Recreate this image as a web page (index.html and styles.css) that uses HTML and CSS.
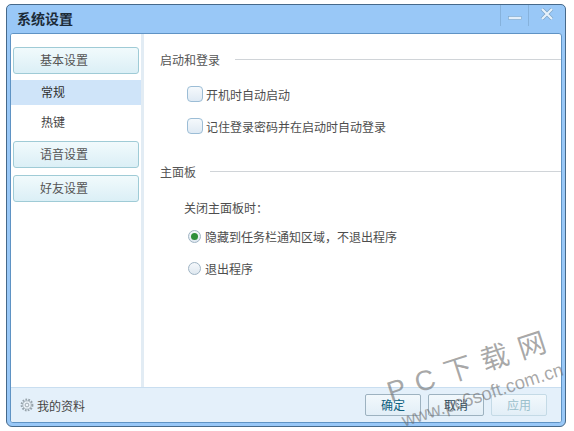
FILE: index.html
```html
<!DOCTYPE html>
<html lang="zh">
<head>
<meta charset="utf-8">
<title>系统设置</title>
<link rel="stylesheet" href="styles.css">
</head>
<body>
<div class="window">
  <header class="titlebar">
    <h1 class="title">系统设置</h1>
    <div class="controls">
      <button class="ctl" aria-label="最小化"><svg width="16" height="12" viewBox="0 0 16 12"><rect x="1.5" y="5.5" width="13" height="3" fill="#e2eefa" stroke="#7ea6c8" stroke-width=".6"/></svg></button>
      <button class="ctl ctl-close" aria-label="关闭"><svg width="16" height="12" viewBox="0 0 16 12"><path d="M3 1l10 10M13 1L3 11" stroke="#7ea6c8" stroke-width="3.6"/><path d="M3 1l10 10M13 1L3 11" stroke="#e6f1fb" stroke-width="2.2"/></svg></button>
    </div>
  </header>
  <div class="client">
    <div class="main">
      <nav class="sidebar">
        <div class="group">基本设置</div>
        <div class="item item-active">常规</div>
        <div class="item">热键</div>
        <div class="group">语音设置</div>
        <div class="group group-last">好友设置</div>
      </nav>
      <section class="content">
        <div class="heading"><span>启动和登录</span><i class="rule"></i></div>
        <div class="opts">
          <label class="check"><i class="box"></i>开机时自动启动</label>
          <label class="check"><i class="box"></i>记住登录密码并在启动时自动登录</label>
        </div>
        <div class="heading heading-2"><span>主面板</span><i class="rule rule-2"></i></div>
        <div class="sub">关闭主面板时：</div>
        <div class="radios">
          <label class="radio"><i class="dot dot-on"></i>隐藏到任务栏通知区域，不退出程序</label>
          <label class="radio"><i class="dot"></i>退出程序</label>
        </div>
      </section>
    </div>
    <footer class="footer">
      <div class="profile">
        <svg class="gear" width="14" height="14" viewBox="0 0 14 14"><circle cx="7" cy="7" r="5.4" fill="none" stroke="#98a4ac" stroke-width="2" stroke-dasharray="1.7 1.2"/><circle cx="7" cy="7" r="4.2" fill="#eef5fb" stroke="#98a4ac" stroke-width=".8"/><circle cx="7" cy="7" r="1.9" fill="none" stroke="#98a4ac" stroke-width=".9"/></svg>
        <span>我的资料</span>
      </div>
      <div class="buttons">
        <button class="btn btn-ok">确定</button>
        <button class="btn">取消</button>
        <button class="btn btn-off">应用</button>
      </div>
    </footer>
  </div>
  <div class="mark">
    <div class="mark-big">P C 下 载 网</div>
    <div class="mark-small">www.pc6soft.com.cn</div>
  </div>
</div>
</body>
</html>
```
FILE: styles.css
```css
* { box-sizing: border-box; }
html, body { margin: 0; height: 100%; }
body {
  background: #fff;
  font-family: "Noto Sans CJK SC", "Liberation Sans", sans-serif;
  font-size: 12px;
  color: #4a4a4a;
  padding: 4px 8px 4px 6px;
  overflow: hidden;
}
.window {
  position: relative;
  width: 560px;
  height: 423px;
  border: 1px solid #46698a;
  border-radius: 5px 5px 6px 6px;
  background: #99c8f7;
  display: flex;
  flex-direction: column;
  padding: 0 3px 3px 3px;
}
.titlebar {
  height: 28px;
  flex: none;
  display: flex;
  justify-content: space-between;
  align-items: flex-start;
}
.title {
  margin: 4px 0 0 7px;
  font-size: 14px;
  line-height: 18px;
  font-weight: 700;
  color: #1c2b38;
}
.controls { display: flex; margin-right: -2px; }
.ctl {
  width: 28px;
  height: 21px;
  padding: 6px 0 0;
  background: transparent;
  border: 0;
  border-left: 1px solid #86b2dc;
  display: flex;
  justify-content: center;
}
.ctl-close { width: 36px; padding-top: 3px; }
.client {
  flex: 1;
  min-height: 0;
  background: #fff;
  border: 1px solid #5f93c4;
  border-radius: 3px;
  display: flex;
  flex-direction: column;
  overflow: hidden;
}
.main { flex: 1; min-height: 0; display: flex; }
.sidebar {
  width: 133px;
  flex: none;
  background: #fff;
  border-right: 3px solid #e2ecf4;
  padding-top: 13px;
  display: flex;
  flex-direction: column;
}
.group {
  height: 27px;
  flex: none;
  margin: 0 2px;
  border: 1px solid #9fcbd6;
  border-radius: 3px;
  background: linear-gradient(#f1fafc, #dbeff6);
  padding-left: 26px;
  font-size: 12px;
  line-height: 24px;
  color: #555;
}
.group-last { margin-top: 7px; }
.item {
  height: 36px;
  flex: none;
  padding-left: 30px;
  line-height: 34px;
  color: #444;
}
.item-active {
  height: 25px;
  margin-top: 6px;
  line-height: 24px;
  background: #cfe4f9;
  color: #2f2f2f;
}
.content { flex: 1; min-width: 0; padding-top: 15px; padding-left: 16px; }
.heading { display: flex; align-items: center; height: 20px; color: #555; }
.rule { flex: 1; height: 1px; background: #d0d4d8; margin-left: 15px; }
.rule-2 { margin-left: 14px; }
.heading-2 { margin-top: 25px; }
.opts { margin: 15px 0 0 27px; display: flex; flex-direction: column; gap: 12px; }
.check, .radio { display: flex; align-items: center; height: 20px; color: #4d4d4d; }
.box {
  width: 16px;
  height: 16px;
  margin-right: 3px;
  border: 1px solid #9cbdd6;
  border-radius: 4px;
  background: linear-gradient(#f5f9fc, #dfeaf4);
}
.sub { margin: 17px 0 0 24px; line-height: 20px; color: #4d4d4d; }
.radios { margin: 8px 0 0 28px; display: flex; flex-direction: column; gap: 12px; }
.dot {
  width: 13px;
  height: 13px;
  margin-right: 4px;
  border: 1px solid #9fb4c4;
  border-radius: 50%;
  background: linear-gradient(#f5f8fb, #dfe8f0);
  display: flex;
  align-items: center;
  justify-content: center;
}
.dot-on::after {
  content: "";
  width: 7px;
  height: 7px;
  border-radius: 50%;
  background: #2f8f3a;
}
.footer {
  height: 35px;
  flex: none;
  background: #e4f0fa;
  border-top: 1px solid #c9def0;
  display: flex;
  justify-content: space-between;
  align-items: center;
  padding: 0 14px 0 9px;
}
.profile { display: flex; align-items: center; gap: 3px; color: #444; }
.buttons { display: flex; gap: 7px; }
.btn {
  width: 56px;
  height: 22px;
  padding: 0;
  border: 1px solid #9db2c0;
  border-radius: 2px;
  background: linear-gradient(#f2f8fc, #e2eef7);
  font-family: inherit;
  font-size: 12px;
  line-height: 20px;
  color: #2e4a5c;
}
.btn-ok { color: #0f5f7e; }
.btn-off { border-color: #c4dae6; color: #9cc0cc; }
.mark {
  position: absolute;
  left: 376px;
  top: 373px;
  pointer-events: none;
  transform: rotate(-18deg);
  transform-origin: 0 0;
  color: rgba(110, 110, 110, .6);
}
.mark-big { font-size: 28px; line-height: 32px; letter-spacing: 1.5px; white-space: nowrap; font-family: "Liberation Sans", "Noto Sans CJK SC", sans-serif; }
.mark-small { font-size: 18.5px; line-height: 18px; margin: 6px 0 0 5px; white-space: nowrap; font-family: "Liberation Sans", sans-serif; }
```
